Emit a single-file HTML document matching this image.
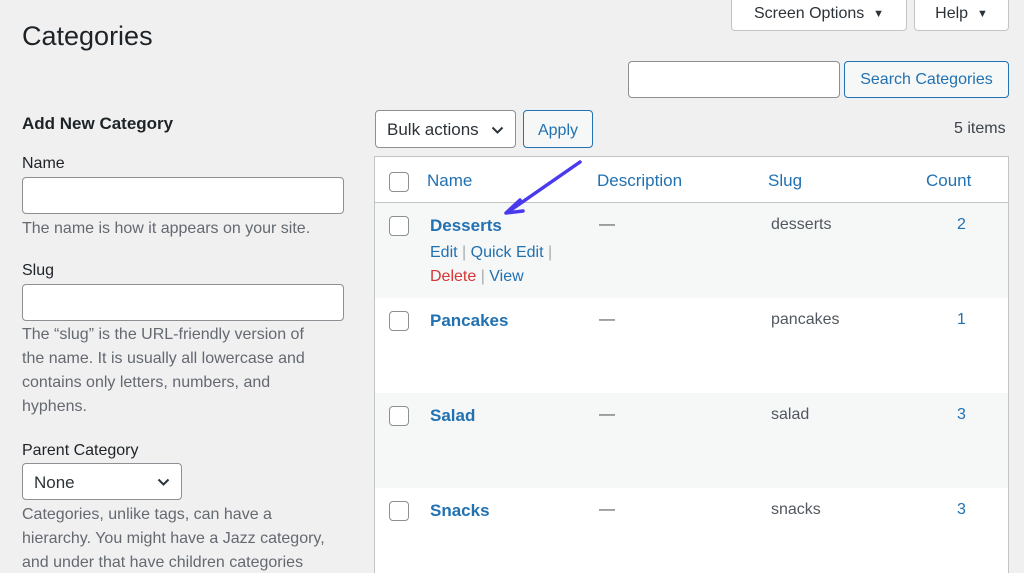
<!DOCTYPE html>
<html><head><meta charset="utf-8"><style>
*{box-sizing:border-box;margin:0;padding:0}
html,body{width:1024px;height:573px;overflow:hidden}
body{background:#f0f0f1;font-family:"Liberation Sans",sans-serif;color:#3c434a;position:relative;font-size:16px}
.a{position:absolute}
.btn{position:absolute;border:1px solid #c3c4c7;background:#fff;border-radius:4px;color:#2c3338;font-size:16px;display:flex;align-items:center;justify-content:center}
.bb{border-color:#2271b1;color:#2271b1;background:#f6f7f7}
.inp{position:absolute;border:1px solid #8c8f94;background:#fff;border-radius:4px}
.lbl{position:absolute;color:#1d2327;font-size:16px}
.desc{position:absolute;color:#646970;font-size:16px;line-height:24px;white-space:nowrap}
.cb{position:absolute;width:20px;height:20px;border:1px solid #8c8f94;border-radius:4px;background:#fff}
.lnk{color:#2271b1}
.row{position:absolute;left:375px;width:633px;height:95px}
.nm{position:absolute;left:55px;top:13px;font-weight:bold;font-size:17px;color:#2271b1}
.dash{position:absolute;left:224px;top:13px;color:#50575e}
.slug{position:absolute;left:396px;top:13px;color:#50575e}
.cnt{position:absolute;left:582px;top:13px;color:#2271b1}
</style></head><body>
<div class="btn" style="left:731px;top:-6px;width:176px;height:37px;padding-top:2px">Screen Options&nbsp;&nbsp;<span style="font-size:11px">▼</span></div>
<div class="btn" style="left:914px;top:-6px;width:95px;height:37px;padding-top:2px">Help&nbsp;&nbsp;<span style="font-size:11px">▼</span></div>
<div class="a" style="left:22px;top:21px;font-size:27px;color:#1d2327">Categories</div>
<div class="inp" style="left:628px;top:61px;width:212px;height:37px"></div>
<div class="btn bb" style="left:844px;top:61px;width:165px;height:37px">Search Categories</div>

<div class="a" style="left:22px;top:114px;font-size:17px;font-weight:bold;color:#1d2327">Add New Category</div>
<div class="lbl" style="left:22px;top:155px">Name</div>
<div class="inp" style="left:22px;top:177px;width:322px;height:37px"></div>
<div class="desc" style="left:22px;top:217px">The name is how it appears on your site.</div>
<div class="lbl" style="left:22px;top:262px">Slug</div>
<div class="inp" style="left:22px;top:284px;width:322px;height:37px"></div>
<div class="desc" style="left:22px;top:323px">The “slug” is the URL-friendly version of<br>the name. It is usually all lowercase and<br>contains only letters, numbers, and<br>hyphens.</div>
<div class="lbl" style="left:22px;top:442px">Parent Category</div>
<div class="inp" style="left:22px;top:463px;width:160px;height:37px;color:#2c3338;padding:9px 11px;font-size:17px">None<svg style="position:absolute;right:11px;top:14px" width="13" height="9" viewBox="0 0 13 9"><path d="M1.5 1.5 6.5 6.5 11.5 1.5" fill="none" stroke="#2c3338" stroke-width="2"/></svg></div>
<div class="desc" style="left:22px;top:503px">Categories, unlike tags, can have a<br>hierarchy. You might have a Jazz category,<br>and under that have children categories</div>

<div class="inp" style="left:375px;top:110px;width:141px;height:38px;color:#2c3338;padding:9px 11px;font-size:17px">Bulk actions<svg style="position:absolute;right:11px;top:15px" width="13" height="9" viewBox="0 0 13 9"><path d="M1.5 1.5 6.5 6.5 11.5 1.5" fill="none" stroke="#2c3338" stroke-width="2"/></svg></div>
<div class="btn bb" style="left:523px;top:110px;width:70px;height:38px;padding-top:3px">Apply</div>
<div class="a" style="left:954px;top:120px;color:#3c434a">5 items</div>

<div class="a" style="left:374px;top:156px;width:635px;height:420px;border:1px solid #c3c4c7;background:#fff"></div>
<div class="row" style="top:157px;height:46px;background:#fff;border-bottom:1px solid #c3c4c7">
 <div class="cb" style="left:14px;top:15px"></div>
 <div class="a lnk" style="left:52px;top:14px;font-size:17px">Name</div>
 <div class="a lnk" style="left:222px;top:14px;font-size:17px">Description</div>
 <div class="a lnk" style="left:393px;top:14px;font-size:17px">Slug</div>
 <div class="a lnk" style="left:551px;top:14px;font-size:17px">Count</div>
</div>
<div class="row" style="top:203px;background:#f6f7f7">
 <div class="cb" style="left:14px;top:13px"></div>
 <div class="nm">Desserts</div><div class="dash">—</div><div class="slug">desserts</div><div class="cnt">2</div>
 <div class="a" style="left:55px;top:38px;line-height:24px;color:#a7aaad"><span class="lnk">Edit</span> | <span class="lnk">Quick Edit</span> |<br><span style="color:#d63638">Delete</span> | <span class="lnk">View</span></div>
</div>
<div class="row" style="top:298px;background:#fff">
 <div class="cb" style="left:14px;top:13px"></div>
 <div class="nm">Pancakes</div><div class="dash">—</div><div class="slug">pancakes</div><div class="cnt">1</div>
</div>
<div class="row" style="top:393px;background:#f6f7f7">
 <div class="cb" style="left:14px;top:13px"></div>
 <div class="nm">Salad</div><div class="dash">—</div><div class="slug">salad</div><div class="cnt">3</div>
</div>
<div class="row" style="top:488px;background:#fff">
 <div class="cb" style="left:14px;top:13px"></div>
 <div class="nm">Snacks</div><div class="dash">—</div><div class="slug">snacks</div><div class="cnt">3</div>
</div>
<svg class="a" style="left:0;top:0" width="1024" height="573"><path d="M580 162 L508 212" stroke="#4a3aed" stroke-width="3.5" stroke-linecap="round" fill="none"/><path d="M520 200 L506 213 L523 211" stroke="#4a3aed" stroke-width="3.5" stroke-linecap="round" stroke-linejoin="round" fill="none"/></svg>
</body></html>
